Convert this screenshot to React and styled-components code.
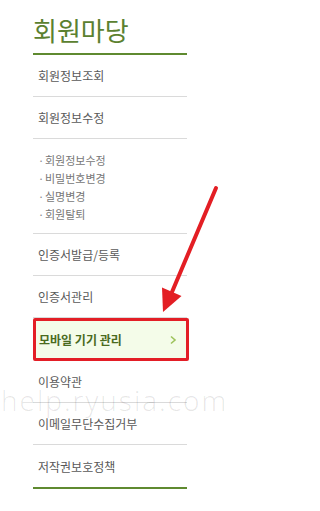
import React from 'react';
import styled, { createGlobalStyle } from 'styled-components';

const GlobalStyle = createGlobalStyle`
  html, body {
    margin: 0;
    padding: 0;
    background: #fff;
  }
  body {
    font-family: "Noto Sans CJK KR", "Noto Sans", sans-serif;
  }
  ul { margin: 0; padding: 0; list-style: none; }
`;

const Page = styled.div`
  position: relative;
  width: 250px;
  height: 511px;
  overflow: hidden;
  padding: 15px 0 0 33px;
  box-sizing: border-box;
`;

const Sidebar = styled.nav`
  width: 154px;
`;

const Title = styled.h2`
  margin: 0;
  font-size: 26px;
  font-weight: 400;
  line-height: 30px;
  color: #5b8130;
  padding-bottom: 8px;
  border-bottom: 2px solid #5f8a30;
`;

const Menu = styled.ul`
  border-bottom: 2px solid #5f8a30;
`;

const Item = styled.li`
  box-sizing: border-box;
  height: ${p => (p.$active ? 43 : 42)}px;
  display: flex;
  align-items: center;
  justify-content: space-between;
  padding: ${p => (p.$active ? '0 9px 0 3px' : '0 0 0 5px')};
  font-size: 12px;
  font-weight: ${p => (p.$active ? 700 : 400)};
  color: ${p => (p.$active ? '#4a6b1e' : '#595959')};
  background: ${p => (p.$active ? '#f4fce9' : 'transparent')};
  border-bottom: ${p => (p.$last || p.$active ? 'none' : '1px solid #dadada')};
  border: ${p => (p.$active ? '3px solid #e31e26' : undefined)};
  border-radius: ${p => (p.$active ? '2px' : '0')};
  margin-right: ${p => (p.$active ? '-2px' : '0')};
`;

const SubList = styled.ul`
  padding: 12px 0 10px 5px;
  border-bottom: 1px solid #dadada;
`;

const SubItem = styled.li`
  font-size: 11px;
  line-height: 18px;
  color: #777;
  &::before {
    content: '·';
    display: inline-block;
    width: 7px;
    color: #888;
  }
`;

const Chevron = () => (
  <svg width="8" height="10" viewBox="0 0 8 10">
    <polyline points="2,1.5 6,5 2,8.5" fill="none" stroke="#9dc35b" strokeWidth="1.6" />
  </svg>
);

// watermark of the source site, lies over the menu
const Watermark = styled.div`
  position: absolute;
  left: 1px;
  top: 386px;
  font-family: "Open Sans", "Liberation Sans", sans-serif;
  font-weight: 300;
  font-size: 28px;
  line-height: 28px;
  letter-spacing: 2px;
  color: rgba(0, 0, 0, 0.1);
  white-space: nowrap;
  pointer-events: none;
`;

const Annotation = styled.svg`
  position: absolute;
  left: 0;
  top: 0;
  pointer-events: none;
`;

const mainItems = ['회원정보조회', '회원정보수정'];
const subItems = ['회원정보수정', '비밀번호변경', '실명변경', '회원탈퇴'];

export default function App() {
  return (
    <>
      <GlobalStyle />
      <Page>
        <Sidebar>
          <Title>회원마당</Title>
          <Menu>
            {mainItems.map(name => <Item key={name}>{name}</Item>)}
            <SubList>
              {subItems.map(name => <SubItem key={name}>{name}</SubItem>)}
            </SubList>
            <Item>인증서발급/등록</Item>
            <Item>인증서관리</Item>
            <Item $active>
              모바일 기기 관리
              <Chevron />
            </Item>
            <Item>이용약관</Item>
            <Item>이메일무단수집거부</Item>
            <Item $last>저작권보호정책</Item>
          </Menu>
        </Sidebar>
        <Watermark>help.ryusia.com</Watermark>
        <Annotation width="250" height="511" viewBox="0 0 250 511">
          <line x1="216" y1="188" x2="172" y2="292" stroke="#e31e24" strokeWidth="4" strokeLinecap="round" />
          <polygon points="162,287.5 181.5,296 163,312" fill="#e31e24" />
        </Annotation>
      </Page>
    </>
  );
}
